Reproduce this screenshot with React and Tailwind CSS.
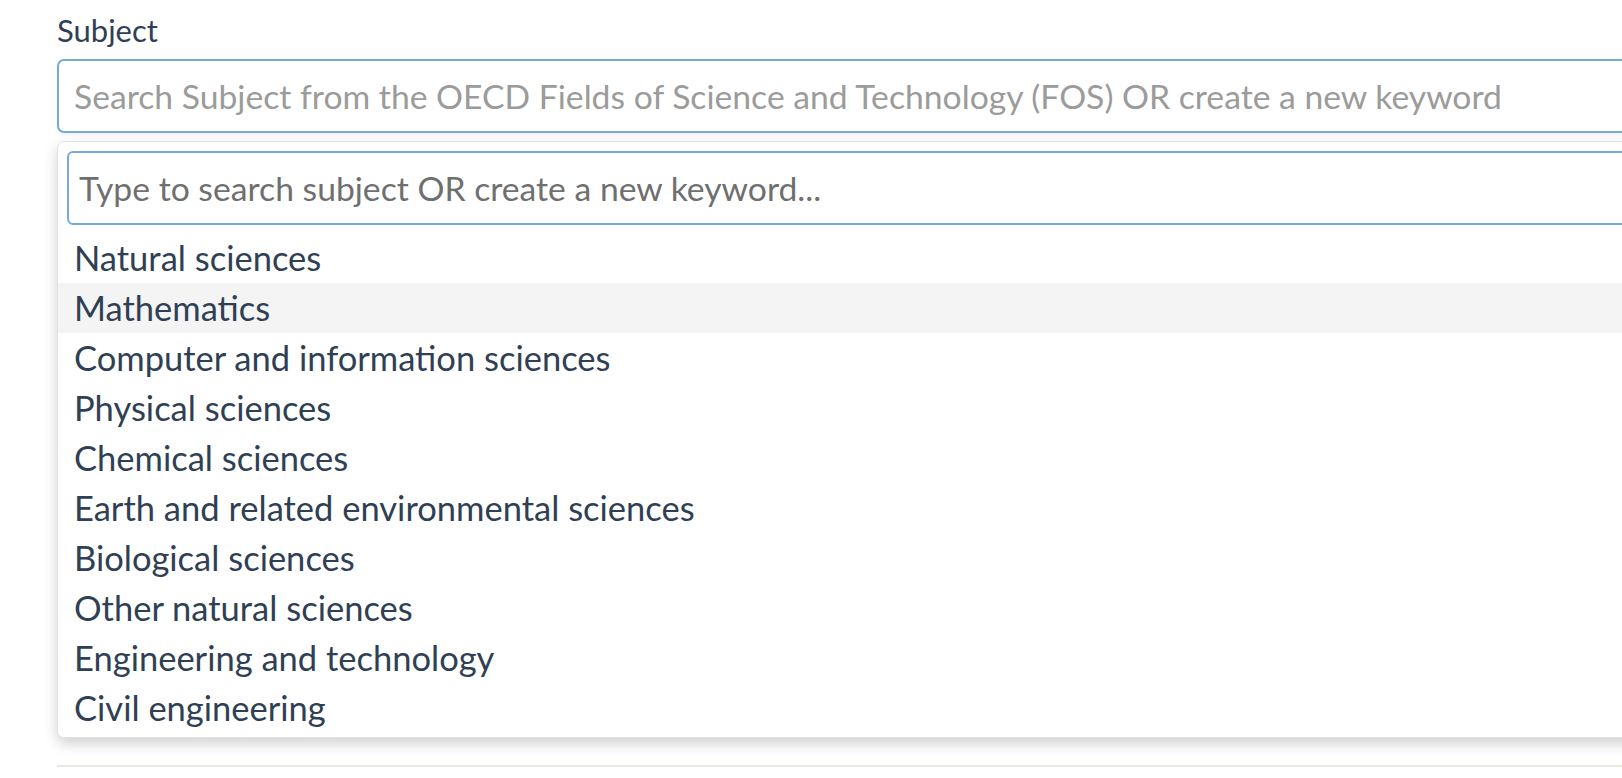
import React from 'react';

const subjects = [
  'Natural sciences',
  'Mathematics',
  'Computer and information sciences',
  'Physical sciences',
  'Chemical sciences',
  'Earth and related environmental sciences',
  'Biological sciences',
  'Other natural sciences',
  'Engineering and technology',
  'Civil engineering',
];

const App = () => {
  const active = 1;

  return (
    <div className="min-h-screen w-full overflow-hidden bg-white font-['Lato',sans-serif]">
      <div className="ml-[57px] w-[1620px] pt-[11px]">
        {/* Label */}
        <label className="block h-[48px] text-[31px] leading-[38px] text-[#2f3f55]">Subject</label>

        {/* Main input */}
        <div className="flex h-[74px] items-center rounded-[7px] border-2 border-[#74aadf] px-[15px] shadow-[0_2px_6px_rgba(0,0,0,0.06)]">
          <span className="whitespace-nowrap text-[33.7px] text-[#9b9b9b]">
            Search Subject from the OECD Fields of Science and Technology (FOS) OR create a new keyword
          </span>
        </div>

        {/* Dropdown panel */}
        <div className="mt-[8px] rounded-[7px] border border-[#e2e2e2] bg-white pb-[4px] pt-[9px] shadow-[0_6px_14px_rgba(0,0,0,0.18)]">
          <div className="mx-[9px] mb-[8px] flex h-[74px] items-center rounded-[6px] border-2 border-[#74aadf] px-[10px]">
            <span className="whitespace-nowrap text-[33.7px] text-[#6f6f6f]">Type to search subject OR create a new keyword...</span>
          </div>
          <ul>
            {subjects.map((s, i) => (
              <li
                key={s}
                className={`flex h-[50px] items-center px-[16px] text-[34.5px] text-[#2f3f55] ${
                  i === active ? 'bg-[#f4f4f4]' : ''
                }`}
              >
                {s}
              </li>
            ))}
          </ul>
        </div>

        {/* Divider */}
        <div className="mt-[27px] h-[2px] bg-[#ece7df]"></div>
      </div>
    </div>
  );
};

export default App;
